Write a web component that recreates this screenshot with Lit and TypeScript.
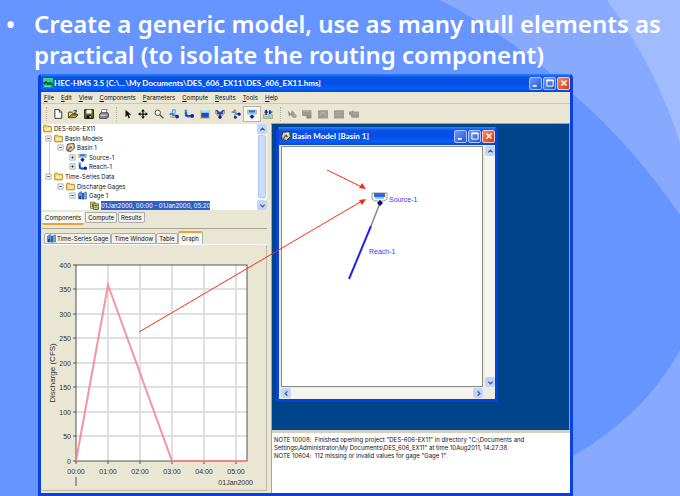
import { LitElement, html, svg, css, nothing } from "lit";
import { customElement, property } from "lit/decorators.js";
import { classMap } from "lit/directives/class-map.js";

const funnel = svg`<path d="M1 2h14v6h-3l-2 2H6L4 8H1z" fill="#e8d9a4" stroke="#a58a45"/><path d="M3 2h10v4H3z" fill="#2f6fff"/><path d="M4 6h8v3H4z" fill="#7be0f5"/><path d="M8 9l4 3-4 4-4-4z" fill="#101ac0"/>`;
const reach = svg`<path d="M3 1v5c0 5 4 6 7 6" fill="none" stroke="#3f8fe0" stroke-width="4"/><path d="M3 5v6h12" fill="none" stroke="#1a2fc4" stroke-width="2"/><circle cx="13" cy="11" r="3" fill="#101a9c"/>`;
const gage = svg`<path d="M1 4l5-3v13H1z" fill="#5a9ad8" stroke="#1d4a8a"/><path d="M7 3h4v12H7z" fill="#2c62c8"/><path d="M12 2h3v12h-3z" fill="#79c4ee" stroke="#1d4a8a"/><path d="M2 9h3v5H2z" fill="#1a3c90"/>`;
const basin = svg`<path d="M3 2l11-1 1 8-6 6-7-1-1-6z" fill="#f1cf7a" stroke="#3b3323" stroke-width="1.6"/><path d="M3 14l4-6 5-4M7 8l4 1" fill="none" stroke="#2456d6" stroke-width="1.8"/><path d="M7 3l5 0 0 5z" fill="#fff"/>`;

const icons: Record<string, unknown> = {
  app: svg`<path d="M0 0h16v16H0z" fill="#15a06a"/><path d="M0 0h16v6H0z" fill="#35d08c"/><path d="M1 9l4-3 3 4 3-2 4 3" fill="none" stroke="#0a3a40" stroke-width="2"/><path d="M2 13h11" stroke="#6ff0c8" stroke-width="2"/>`,
  folder: svg`<path d="M1 4q0-2 2-2h3l2 2h6q1 0 1 1v8q0 1-1 1H2q-1 0-1-1z" fill="#f6c945" stroke="#9a7420" stroke-width="1.3"/><path d="M3 6h11v6H3z" fill="#ffe996"/>`,
  basin,
  source: funnel,
  reach,
  gage,
  data: svg`<path d="M1 2h8v11H1z" fill="#e8f0dc" stroke="#477a2d" stroke-width="1.5"/><path d="M3 4h3v7H3z" fill="#d04a30"/><path d="M6 5h9v10H6z" fill="#c8dc7c" stroke="#3e5c28" stroke-width="1.5"/><path d="M8 8h5M8 11h5" stroke="#38702c" stroke-width="1.5"/>`,
  file: svg`<path d="M3 1h7l4 4v10H3z" fill="#fff" stroke="#222" stroke-width="1.4"/><path d="M10 1v4h4" fill="none" stroke="#222" stroke-width="1.2"/>`,
  open: svg`<path d="M1 14V5h5l1 2h6v3" fill="#f7ea8a" stroke="#3b3810" stroke-width="1.5"/><path d="M1 14l4-5h11l-4 5z" fill="#a59a28" stroke="#2d2b0c" stroke-width="1.2"/><path d="M8 4c2-3 4-2 5 0M13 1v4h-3" fill="none" stroke="#222" stroke-width="1.3"/>`,
  save: svg`<path d="M1 1h14v14H1z" fill="#6a7434" stroke="#111" stroke-width="1.5"/><path d="M4 1h8v6H4z" fill="#f2f2ee"/><path d="M4 10h8v5H4z" fill="#111"/><path d="M9 11h2v3H9z" fill="#eee"/>`,
  print: svg`<path d="M5 1h8l-2 6H3z" fill="#fff" stroke="#444"/><path d="M1 8l3-2h10l1 2v5l-3 2H1z" fill="#8d8d95" stroke="#33333b" stroke-width="1.3"/><path d="M2 10h9" stroke="#e5e5e5" stroke-width="1.5"/><path d="M10 13h3" stroke="#6a4fd0" stroke-width="2"/>`,
  pointer: svg`<path d="M4 1v12l3-3 2 5 2-1-2-5h4z" fill="#111"/>`,
  move: svg`<path d="M8 0l3 4H9v3h3V5l4 3-4 3V9H9v3h2l-3 4-3-4h2V9H4v2L0 8l4-3v2h3V4H5z" fill="#111"/>`,
  zoom: svg`<circle cx="6" cy="6" r="4.3" fill="#f3f7f8" stroke="#444" stroke-width="1.5"/><path d="M9 9l6 6" stroke="#444" stroke-width="2.2"/>`,
  subbasin: svg`<path d="M6 1h4v5l-2 2-3-1z" fill="#a9dcf5" stroke="#2a70b8"/><path d="M1 9q4-3 6 1l7 1" fill="none" stroke="#1f86cf" stroke-width="3"/><path d="M2 13h8" stroke="#bd9b52" stroke-width="2"/><circle cx="13" cy="12" r="3" fill="#122a9c"/>`,
  reservoir: svg`<path d="M0 2h3v11h10V2h3v14H0z" fill="#dcc68c"/><path d="M2 2h12v4H2z" fill="#9be6f5"/><path d="M2 6h12v8H2z" fill="#1650d8"/>`,
  junction: svg`<path d="M1 2l4 1 3 3 3-3 4-1 0 5-4 4H5L1 7z" fill="#e7d394" stroke="#7a6430"/><path d="M2 2l6 5 6-5M8 6v8M3 7h10" fill="none" stroke="#1c49c8" stroke-width="2.5"/><circle cx="8" cy="13" r="2.6" fill="#101a8c"/>`,
  diversion: svg`<path d="M1 5h5l3 3h5" fill="none" stroke="#3d9ae0" stroke-width="3"/><circle cx="6" cy="3" r="2.6" fill="#b89448"/><path d="M6 8v6" stroke="#b89448" stroke-width="2.5"/><circle cx="13" cy="8" r="2.6" fill="#101a8c"/><circle cx="7" cy="13" r="2.4" fill="#17329c"/>`,
  sink: svg`<path d="M1 9h14v6H1z" fill="#ecd894" stroke="#9a7c34"/><path d="M3 11h10v2H3z" fill="#56cde8"/><path d="M5 1v8M11 2v6" stroke="#17329c" stroke-width="3"/><path d="M2 5h6M9 5h6" stroke="#17329c" stroke-width="2"/>`,
  g1: svg`<path d="M1 2l5 5 2-5 4 4 2 8-5-1-3-3-3 2z" fill="#9b9a93"/><circle cx="12" cy="11" r="3.5" fill="#a9a8a1"/>`,
  g2: svg`<path d="M0 2h15v9H0z" fill="#9b9a93"/><path d="M7 10h8v5H7z" fill="#8b8a84"/><path d="M2 4h11" stroke="#b9b8af"/>`,
  g3: svg`<path d="M0 2h16v13H0z" fill="#9b9a93"/><path d="M3 11l3-5h4l3 5" fill="none" stroke="#c4c3b8" stroke-width="1.5"/>`,
  g4: svg`<path d="M0 2h16v13H0z" fill="#9b9a93"/><path d="M1 6h14M1 10h14" stroke="#b9b8af"/>`,
  g5: svg`<path d="M0 4h4l1-2 3 2h8v10H4L2 9H0z" fill="#9b9a93"/><path d="M6 7h8" stroke="#b4b3aa"/>`,
  min: svg`<path d="M3 11h6v3H3z" fill="#fff"/>`,
  max: svg`<path d="M3 3h10v10H3z" fill="none" stroke="#fff" stroke-width="1.6"/><path d="M2 3h12v2H2z" fill="#fff"/>`,
  close: svg`<path d="M4 4l8 8M12 4l-8 8" stroke="#fff" stroke-width="2.4"/>`,
  up: svg`<path d="M3 10l5-5 5 5" fill="none" stroke="#43608f" stroke-width="3"/>`,
  down: svg`<path d="M3 6l5 5 5-5" fill="none" stroke="#43608f" stroke-width="3"/>`,
  left: svg`<path d="M10 3L5 8l5 5" fill="none" stroke="#43608f" stroke-width="3"/>`,
  right: svg`<path d="M6 3l5 5-5 5" fill="none" stroke="#43608f" stroke-width="3"/>`,
  plus: svg`<path d="M2 2h12v12H2z" fill="#f4f4f0" stroke="#8c9aa8" stroke-width="1.6"/><path d="M5 8h6M8 5v6" stroke="#333" stroke-width="1.8"/>`,
  minus: svg`<path d="M2 2h12v12H2z" fill="#f4f4f0" stroke="#8c9aa8" stroke-width="1.6"/><path d="M5 8h6" stroke="#333" stroke-width="1.8"/>`,
};

const icon = (name: string) =>
  html`<svg class="icon" viewBox="0 0 16 16" aria-hidden="true">${icons[name]}</svg>`;

const shared = css`
  :host { display: block; box-sizing: border-box; }
  *, *::before, *::after { box-sizing: border-box; }
  button { margin: 0; padding: 0; border: 0; background: none; font: inherit; color: inherit; }
  .icon { display: block; width: 10px; height: 10px; flex: none; }
`;

@customElement("window-title")
class WindowTitle extends LitElement {
  @property() label = "";
  @property() glyph = "app";
  static styles = [shared, css`
    :host {
      display: flex; align-items: center; gap: 1px; height: 18px; padding: 0 0 0 2px;
      background: linear-gradient(#2a83ff, #0a50e4 20%, #0450e8 55%, #0560fa 80%, #0347d0);
      color: #fff; font: 700 8px/10px "Lato", sans-serif;
    }
    .label { flex: 1; white-space: pre; overflow: hidden; }
    .btn {
      width: 13px; height: 13px; border: 1px solid #a9c4ff; border-radius: 2px; display: grid; place-items: center;
      background: linear-gradient(135deg, #6f97f8, #2456e0);
    }
    .close { background: linear-gradient(135deg, #f08a68, #d63a14); border-color: #ffc9b8; }
  `];
  render() {
    return html`${icon(this.glyph)}<span class="label">${this.label}</span>
      <button class="btn" aria-label="Minimize">${icon("min")}</button>
      <button class="btn" aria-label="Maximize">${icon("max")}</button>
      <button class="btn close" aria-label="Close">${icon("close")}</button>`;
  }
}

@customElement("scroll-bar")
class ScrollBar extends LitElement {
  @property({ type: Boolean, reflect: true }) horizontal = false;
  @property({ type: Boolean }) thumb = false;
  static styles = [shared, css`
    :host { display: flex; flex-direction: column; justify-content: space-between; width: 10px; background: #f6f5ef; }
    :host([horizontal]) { flex-direction: row; width: auto; height: 10px; }
    .end { width: 10px; height: 10px; border-radius: 2px; background: #c3d4fb; display: grid; place-items: center; flex: none; }
    .end .icon { width: 7px; height: 7px; }
    .thumb { flex: 1; margin: 1px 1px 2px; border: 1px solid #b4c8f6; border-radius: 2px; background: #cbdafd; }
  `];
  render() {
    return html`
      <button class="end" aria-label="Scroll back">${icon(this.horizontal ? "left" : "up")}</button>
      ${this.thumb ? html`<div class="thumb"></div>` : nothing}
      <button class="end" aria-label="Scroll forward">${icon(this.horizontal ? "right" : "down")}</button>`;
  }
}

@customElement("hydrograph-chart")
class HydrographChart extends LitElement {
  static styles = [shared, css`
    .chart { display: block; width: 100%; height: 244px; font: 7px "Liberation Sans", sans-serif; fill: #333; }
    .title { font-size: 8px; }
    .grid { stroke: #e0e0e0; stroke-width: 2; }
    .axis { stroke: #555; fill: none; }
    .plot { fill: #fff; }
    .series { fill: none; stroke: #f2828f; stroke-width: 2; stroke-opacity: 0.85; }
  `];
  private x(hour: number) { return 34 + hour * 32; }
  private y(flow: number) { return 216 - Math.round(flow * 0.49); }
  render() {
    const flows = [0, 50, 100, 150, 200, 250, 300, 350, 400];
    const hours = [0, 1, 2, 3, 4, 5];
    const data = [[0, 0], [1, 360], [3, 0], [5.34, 0]];
    return html`<svg class="chart" role="img" aria-label="Discharge hydrograph">
      <rect class="plot" x="34" y="20" width="171" height="196"/>
      ${flows.slice(1, -1).map((f) => svg`<path class="grid" d="M34 ${this.y(f)}H205"/>`)}
      ${hours.slice(1).map((h) => svg`<path class="grid" d="M${this.x(h)} 20V216"/>`)}
      <rect class="axis" x="34" y="20" width="171" height="196"/>
      ${flows.map((f) => svg`<path class="axis" d="M31 ${this.y(f)}H34"/><text x="29" y="${this.y(f) + 3}" text-anchor="end">${f}</text>`)}
      ${hours.map((h) => svg`<path class="axis" d="M${this.x(h)} 216V219"/><text x="${this.x(h)}" y="229" text-anchor="middle">${String(h).padStart(2, "0")}:00</text>`)}
      <polyline class="series" points=${data.map(([h, f]) => `${this.x(h)},${this.y(f)}`).join(" ")}/>
      <path class="axis" d="M34 232V241"/>
      <text x="211" y="240" text-anchor="end">01Jan2000</text>
      <text class="title" transform="translate(13 128) rotate(-90)" text-anchor="middle">Discharge (CFS)</text>
    </svg>`;
  }
}

const MENUS = ["File", "Edit", "View", "Components", "Parameters", "Compute", "Results", "Tools", "Help"];
const TOOLS = [
  { cls: "file-tools", items: [["file", "New"], ["open", "Open"], ["save", "Save"], ["print", "Print"]] },
  { cls: "map-tools", items: [["pointer", "Select"], ["move", "Pan"], ["zoom", "Zoom"], ["subbasin", "Subbasin"], ["reach", "Reach"], ["reservoir", "Reservoir"], ["junction", "Junction"], ["diversion", "Diversion"], ["source", "Source"], ["sink", "Sink"]] },
  { cls: "result-tools", items: [["g1", "Compute"], ["g2", "Map results"], ["g3", "Graph"], ["g4", "Summary"], ["g5", "Time series"]] },
];
const TREE = [
  { level: 0, icon: "folder", text: "DES-606-EX11" },
  { level: 1, icon: "folder", text: "Basin Models", handle: "minus" },
  { level: 2, icon: "basin", text: "Basin 1", handle: "minus" },
  { level: 3, icon: "source", text: "Source-1", handle: "plus" },
  { level: 3, icon: "reach", text: "Reach-1", handle: "plus" },
  { level: 1, icon: "folder", text: "Time-Series Data", handle: "minus" },
  { level: 2, icon: "folder", text: "Discharge Gages", handle: "minus" },
  { level: 3, icon: "gage", text: "Gage 1", handle: "minus" },
  { level: 4, icon: "data", text: "01Jan2000, 00:00 - 01Jan2000, 05:20", selected: true },
];

@customElement("hms-window")
class HmsWindow extends LitElement {
  static styles = [shared, css`
    :host {
      display: flex; flex-direction: column; border: solid #0a3fe0; border-width: 0 3px 3px;
      border-radius: 4px 4px 0 0; overflow: hidden; background: #e9e6d4; color: #111;
      font: 6px/9px "Inter", "Liberation Sans", sans-serif;
    }
    .menu { display: flex; gap: 7px; height: 12px; padding: 0 3px; border-bottom: 1px solid #cbc8b8; }
    .menu .first { text-decoration: underline; }
    .toolbar { display: flex; align-items: center; height: 19px; padding-left: 3px; }
    .grip { width: 2px; height: 14px; margin: 0 2px; border-left: 1px dotted #b5b29f; }
    .tools { display: flex; }
    .tools button { flex: 1; height: 16px; display: grid; place-items: center; }
    .file-tools { width: 62px; margin-right: 2px; }
    .map-tools { width: 156px; margin-right: 2px; }
    .result-tools { width: 78px; }
    .tools .on { background: #f8f7f1; border: 1px solid #bbb8a8; }
    .body { flex: 1; display: grid; grid-template-columns: 231px 1fr; min-height: 0; }
    .side { display: flex; flex-direction: column; padding: 1px 4px 0 1px; border-right: 1px solid #a8a595; }
    .tree { display: flex; height: 86px; background: #fff; }
    .rows { flex: 1; display: grid; grid-auto-rows: minmax(0, 1fr); margin: 0; padding: 0; list-style: none; min-width: 0;
      background: linear-gradient(#ccc, #ccc) 7px 14px / 1px 38px no-repeat; }
    .row { display: flex; align-items: center; gap: 2px; white-space: pre; }
    .row .icon { width: 9px; height: 9px; }
    .handle { width: 7px; height: 7px; }
    .handle .icon { width: 7px; height: 7px; }
    .selected { background: #2f5fc4; color: #fff; }
    .tabs { display: flex; align-items: flex-start; gap: 1px; height: 18px; padding-top: 2px; }
    .tab { height: 11px; padding: 0 2px; border: 1px solid #a9adaa; border-radius: 0 0 2px 2px; background: #f3f2ea; display: flex; align-items: center; gap: 1px; white-space: nowrap; }
    .tabs .current { height: 13px; padding: 0 3px; border: 0; border-bottom: 2px solid #f0a030; background: #f8f7f0; }
    .editor-tabs { align-items: flex-end; gap: 0; height: 17px; padding: 0 2px; border-top: 1px solid #a8a595; border-bottom: 1px solid #fff; }
    .editor-tabs .tab { border-radius: 2px 2px 0 0; }
    .editor-tabs .icon { width: 9px; height: 9px; }
    .editor-tabs .current { border: 1px solid #a9adaa; border-width: 2px 1px 0; border-top-color: #f0a030; }
    .editor { flex: 1; border: 1px solid #bdbaa8; border-width: 0 1px 1px 0; margin-bottom: 2px; }
    .main { display: grid; grid-template-rows: 1fr 63px; min-width: 0; }
    .desktop { position: relative; background: #00458c; border: 1px solid #8fa3b4; border-width: 1px 1px 0 0; overflow: hidden; }
    .child { position: absolute; left: 4px; top: 3px; width: 222px; height: 275px; display: flex; flex-direction: column;
      border: solid #0a3fe0; border-width: 0 3px 3px; border-radius: 4px 4px 0 0; overflow: hidden; background: #eeecdf; }
    .view { flex: 1; display: grid; grid-template: 1fr 11px / 1fr 12px; padding: 1px 0 1px 2px; justify-items: stretch; }
    .vertical { margin-left: 2px; }
    .horizontal { margin-top: 1px; }
    .canvas { background: #fff; border: 1px solid #8b8b83; width: 100%; height: 100%; font: 7px "Liberation Sans", sans-serif; fill: #3a3aee; display: block; }
    .log { margin: 0; padding: 3px 2px; border-top: 3px solid #d4d1c0; background: #fff; line-height: 8px; }
    .log p { margin: 0; white-space: pre-wrap; }
  `];

  private treeRow(n: any) {
    const pad = n.level ? 3 + (n.level - 1) * 12 : 1;
    return html`<li class="row" style="padding-left:${pad}px">
      ${n.level ? html`<span class="handle">${n.handle ? icon(n.handle) : nothing}</span>` : nothing}
      ${icon(n.icon)}<span class=${classMap({ selected: !!n.selected })}>${n.text}</span></li>`;
  }

  render() {
    return html`
      <window-title label="HEC-HMS 3.5 [C:\\...\\My Documents\\DES_606_EX11\\DES_606_EX11.hms]"></window-title>
      <nav class="menu">${MENUS.map((m) => html`<button><span class="first">${m[0]}</span>${m.slice(1)}</button>`)}</nav>
      <div class="toolbar">
        ${TOOLS.map((g) => html`<span class="grip"></span><div class="tools ${g.cls}">
          ${g.items.map(([i, t]) => html`<button class=${classMap({ on: i === "source" })} aria-label=${t}>${icon(i)}</button>`)}</div>`)}
      </div>
      <div class="body">
        <div class="side">
          <div class="tree"><ul class="rows">${TREE.map((n) => this.treeRow(n))}</ul><scroll-bar thumb></scroll-bar></div>
          <div class="tabs">
            <button class="tab current">Components</button><button class="tab">Compute</button><button class="tab">Results</button>
          </div>
          <div class="tabs editor-tabs">
            <button class="tab">${icon("gage")}Time-Series Gage</button><button class="tab">Time Window</button><button class="tab">Table</button><button class="tab current">Graph</button>
          </div>
          <div class="editor"><hydrograph-chart></hydrograph-chart></div>
        </div>
        <div class="main">
          <div class="desktop">
            <section class="child">
              <window-title glyph="basin" label="Basin Model [Basin 1]"></window-title>
              <div class="view">
                <svg class="canvas" role="img" aria-label="Basin map">
                  <path d="M98 56L89 79" stroke="#888" stroke-width="1.5"/>
                  <path d="M89 79L67 132" stroke="#2222ee" stroke-width="2"/>
                  <path d="M90 46h15v6l-3 2H93l-3-2z" fill="#fff" stroke="#b09a60"/>
                  <path d="M92 46h11v4H92z" fill="#2b66f0"/><path d="M93 50h9v2h-9z" fill="#6fdcf0"/>
                  <path d="M98 53l3 3-3 3-3-3z" fill="#0a0a80"/>
                  <text x="107" y="55">Source-1</text>
                  <text x="87" y="107">Reach-1</text>
                </svg>
                <scroll-bar class="vertical"></scroll-bar>
                <scroll-bar class="horizontal" horizontal></scroll-bar>
              </div>
            </section>
          </div>
          <div class="log">
            <p>NOTE 10008:  Finished opening project "DES-606-EX11" in directory "C:\\Documents and
Settings\\Administrator\\My Documents\\DES_606_EX11" at time 10Aug2011, 14:27:38.</p>
            <p>NOTE 10604:  112 missing or invalid values for gage "Gage 1".</p>
          </div>
        </div>
      </div>`;
  }
}

@customElement("app-root")
class AppRoot extends LitElement {
  static styles = [shared, css`
    :host { position: relative; display: flex; flex-direction: column; min-height: 100vh; background: #6795ff; overflow: hidden; }
    .backdrop, .arrows { position: absolute; inset: 0; width: 100%; height: 100%; pointer-events: none; }
    .points { position: relative; margin: 0; padding: 8px 8px 4px 34px; list-style: none; color: #fff;
      font: 600 24px/31px "Noto Sans", "Open Sans", sans-serif; white-space: nowrap; }
    .points li::before { content: "•"; position: absolute; left: 6px; }
    .shot { position: relative; flex: 1; margin: 0 107px 0 38px; }
  `];
  render() {
    return html`
      <svg class="backdrop" viewBox="0 0 680 496" preserveAspectRatio="none" aria-hidden="true">
        <path d="M440 0Q520 42 573 94Q632 145 680 215V0z" fill="#87aaff"/>
        <path d="M607 0Q657 69 680 143V0z" fill="#a0bbff"/>
        <path d="M480 496Q626 450 680 350V496z" fill="#87aaff"/>
      </svg>
      <ul class="points"><li>Create a generic model, use as many null elements as<br>practical (to isolate the routing component)</li></ul>
      <hms-window class="shot"></hms-window>
      <svg class="arrows" aria-hidden="true">
        <g stroke="#ff2a10" fill="#ff2a10">
          <path d="M327 170L362 187M139 332L362 201"/>
          <path d="M366 189l-7-1 3-5zM366 199l-7 1 3 5z" stroke="none"/>
        </g>
      </svg>`;
  }
}
